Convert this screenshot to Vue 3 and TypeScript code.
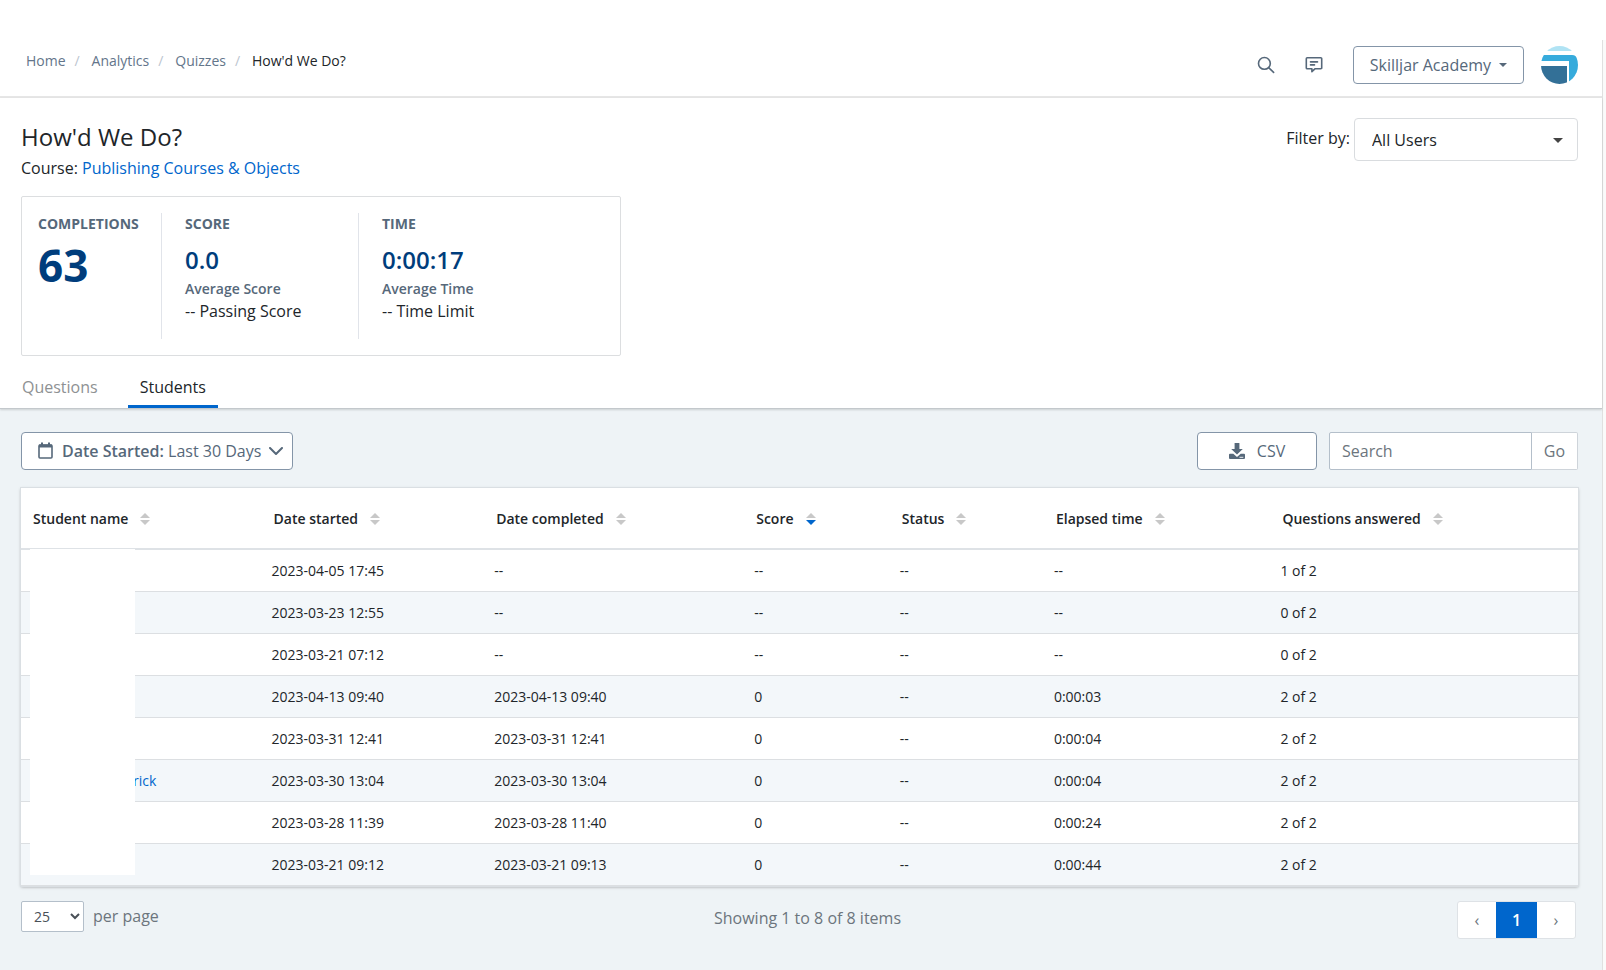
<script setup lang="ts">
import { ref } from 'vue'

interface Column {
  key: string
  label: string
  width: string
  sorted?: boolean
}

interface Attempt {
  name: string
  started: string
  completed: string
  score: string
  status: string
  elapsed: string
  answered: string
}

const crumbs: string[] = ['Home', 'Analytics', 'Quizzes']

const columns: Column[] = [
  { key: 'name', label: 'Student name', width: '15.45%' },
  { key: 'started', label: 'Date started', width: '14.3%' },
  { key: 'completed', label: 'Date completed', width: '16.7%' },
  { key: 'score', label: 'Score', width: '9.35%', sorted: true },
  { key: 'status', label: 'Status', width: '9.9%' },
  { key: 'elapsed', label: 'Elapsed time', width: '14.55%' },
  { key: 'answered', label: 'Questions answered', width: 'auto' },
]

const attempt = (
  started: string,
  completed: string,
  score: string,
  elapsed: string,
  answered: string,
  name = '',
): Attempt => ({ name, started, completed, score, status: '--', elapsed, answered })

const attempts: Attempt[] = [
  attempt('2023-04-05 17:45', '--', '--', '--', '1 of 2'),
  attempt('2023-03-23 12:55', '--', '--', '--', '0 of 2'),
  attempt('2023-03-21 07:12', '--', '--', '--', '0 of 2'),
  attempt('2023-04-13 09:40', '2023-04-13 09:40', '0', '0:00:03', '2 of 2'),
  attempt('2023-03-31 12:41', '2023-03-31 12:41', '0', '0:00:04', '2 of 2'),
  attempt('2023-03-30 13:04', '2023-03-30 13:04', '0', '0:00:04', '2 of 2', 'rick'),
  attempt('2023-03-28 11:39', '2023-03-28 11:40', '0', '0:00:24', '2 of 2'),
  attempt('2023-03-21 09:12', '2023-03-21 09:13', '0', '0:00:44', '2 of 2'),
]

const userFilter = ref('All Users')
const search = ref('')
const pageSize = ref('25')
</script>

<template>
  <div class="page">
    <div class="shell">
      <header class="topbar">
        <nav class="crumbs" aria-label="Breadcrumb">
          <template v-for="crumb in crumbs" :key="crumb">
            <a href="#">{{ crumb }}</a>
            <span class="slash">/</span>
          </template>
          <span class="current">How'd We Do?</span>
        </nav>
        <div class="account">
          <button class="icon-button" type="button" aria-label="Search">
            <svg width="18" height="18" viewBox="0 0 18 18" fill="none" stroke="#56687a" stroke-width="1.6">
              <circle cx="7.4" cy="7.4" r="5.9" />
              <path d="M11.7 11.7 16.6 16.4" stroke-linecap="round" />
            </svg>
          </button>
          <button class="icon-button" type="button" aria-label="Messages">
            <svg width="18" height="18" viewBox="0 0 18 18" fill="none" stroke="#56687a" stroke-width="1.6">
              <path d="M2.2 1.8h13.6a.9.9 0 0 1 .9.9v9.2a.9.9 0 0 1-.9.9H9.9L6.9 15.7V12.8H2.2a.9.9 0 0 1-.9-.9V2.7a.9.9 0 0 1 .9-.9Z" stroke-linejoin="round" />
              <path d="M5.500 5.900h7M5.500 8.900h4" stroke-linecap="round" />
            </svg>
          </button>
          <button class="outline academy" type="button">
            Skilljar Academy
            <svg width="8" height="4" viewBox="0 0 8 4"><path d="M0 0h8L4 4Z" fill="#56687a" /></svg>
          </button>
          <svg class="avatar" width="37" height="38" viewBox="0 0 37 38" role="img" aria-label="Account">
            <clipPath id="avatar-clip"><ellipse cx="18.5" cy="19" rx="18.5" ry="19" /></clipPath>
            <g clip-path="url(#avatar-clip)">
              <rect width="37" height="38" fill="#fff" />
              <rect width="37" height="5" fill="#b0e3f4" />
              <path d="M0 9H31Q35 9 37 13V38H28V15H0Z" fill="#36abdc" />
              <path d="M0 20H26V38H0Z" fill="#337097" />
            </g>
          </svg>
        </div>
      </header>

      <section class="summary">
        <div class="heading">
          <div>
            <h1>How'd We Do?</h1>
            <p class="course">Course: <a href="#">Publishing Courses &amp; Objects</a></p>
          </div>
          <div class="filter">
            <label for="user-filter">Filter by:</label>
            <div class="select-wrap">
              <select id="user-filter" v-model="userFilter">
                <option>All Users</option>
              </select>
              <svg class="caret" width="10" height="5" viewBox="0 0 10 5"><path d="M0 0h10L5 5Z" fill="#444" /></svg>
            </div>
          </div>
        </div>

        <div class="stats">
          <div class="stat">
            <h2>COMPLETIONS</h2>
            <p class="total">63</p>
          </div>
          <div class="stat score">
            <h2>SCORE</h2>
            <p class="value">0.0</p>
            <p class="caption">Average Score</p>
            <p>-- Passing Score</p>
          </div>
          <div class="stat">
            <h2>TIME</h2>
            <p class="value">0:00:17</p>
            <p class="caption">Average Time</p>
            <p>-- Time Limit</p>
          </div>
        </div>

        <nav class="tabs">
          <a href="#">Questions</a>
          <a href="#" class="active" aria-current="page">Students</a>
        </nav>
      </section>

      <main class="content">
        <div class="toolbar">
          <button class="outline date" type="button">
            <svg width="16" height="18" viewBox="0 0 16 18" fill="none" stroke="#56687a">
              <rect x="1" y="3" width="13" height="13" rx="1" stroke-width="1.6" />
              <path d="M1 4h13" stroke-width="3" />
              <path d="M4 .5v3M11 .5v3" stroke-width="2" />
            </svg>
            <span><b>Date Started:</b> Last 30 Days</span>
            <svg width="14" height="9" viewBox="0 0 14 9" fill="none" stroke="#56687a" stroke-width="2"><path d="M1 1l6 6 6-6" stroke-linecap="round" stroke-linejoin="round" /></svg>
          </button>
          <div class="tools">
            <button class="outline csv" type="button">
              <svg width="16" height="17" viewBox="0 0 16 17" fill="#56687a">
                <path d="M5.6 0h4.8v6h3.4L8 11.6 2.2 6h3.4Z" />
                <path d="M1 10.800h3.300L8 14l3.700-3.200H15a1 1 0 0 1 1 1V15a1 1 0 0 1-1 1H1a1 1 0 0 1-1-1v-3.200a1 1 0 0 1 1-1Z" />
                <path d="M10.500 14.300h3.800" stroke="#fff" stroke-width=".9" />
              </svg>
              CSV
            </button>
            <form class="search" @submit.prevent>
              <input v-model="search" type="text" placeholder="Search" aria-label="Search students" />
              <button type="submit">Go</button>
            </form>
          </div>
        </div>

        <div class="card">
          <table>
            <colgroup>
              <col v-for="column in columns" :key="column.key" :style="{ width: column.width }" />
            </colgroup>
            <thead>
              <tr>
                <th v-for="column in columns" :key="column.key" scope="col">
                  <span class="th">
                    {{ column.label }}
                    <svg width="10" height="12" viewBox="0 0 10 12">
                      <path d="M5 0l5 5H0Z" fill="#c8c8c8" />
                      <path d="M0 7h10L5 12Z" :fill="column.sorted ? '#0066cc' : '#c8c8c8'" />
                    </svg>
                  </span>
                </th>
              </tr>
            </thead>
            <tbody>
              <tr v-for="row in attempts" :key="row.started">
                <td><a v-if="row.name" class="student" href="#">{{ row.name }}</a></td>
                <td>{{ row.started }}</td>
                <td>{{ row.completed }}</td>
                <td>{{ row.score }}</td>
                <td>{{ row.status }}</td>
                <td>{{ row.elapsed }}</td>
                <td>{{ row.answered }}</td>
              </tr>
            </tbody>
          </table>
          <div class="redaction"></div>
        </div>

        <footer class="footer">
          <div class="page-size">
            <select id="page-size" v-model="pageSize">
              <option>25</option>
              <option>50</option>
            </select>
            <label for="page-size">per page</label>
          </div>
          <p class="showing">Showing 1 to 8 of 8 items</p>
          <nav class="pager" aria-label="Pages">
            <button type="button" aria-label="Previous page">‹</button>
            <button type="button" class="active">1</button>
            <button type="button" aria-label="Next page">›</button>
          </nav>
        </footer>
      </main>
    </div>
  </div>
</template>

<style>
body {
  margin: 0;
  background: #fff;
}
</style>

<style scoped>
.page {
  box-sizing: border-box;
  display: flex;
  min-height: 100vh;
  padding: 40px 3px 0 0;
  background: linear-gradient(#fff 40px, #fafafa 40px);
  color: #212529;
  font: 16px/24px 'Open Sans', 'Noto Sans', sans-serif;
}

.page * {
  box-sizing: border-box;
}

.shell {
  flex: 1;
  display: flex;
  flex-direction: column;
  border-right: 1px solid #e0e0e0;
  background: #fff;
}

a {
  color: #0066cc;
  text-decoration: none;
}

p,
h1,
h2 {
  margin: 0;
}

button,
input,
select {
  font: inherit;
  color: #56687a;
}

.topbar {
  display: flex;
  justify-content: space-between;
  height: 58px;
  padding: 6px 24px 0 26px;
  border-bottom: 2px solid #e6e6e6;
}

.crumbs {
  display: flex;
  padding-top: 3px;
  font-size: 14px;
}

.crumbs a {
  color: #63758a;
}

.slash {
  width: 26px;
  padding-left: 9px;
  color: #bcc5cf;
}

.account {
  display: flex;
  align-items: flex-start;
}

.icon-button {
  display: flex;
  width: 18px;
  height: 38px;
  margin-right: 30px;
  padding: 0;
  align-items: center;
  border: 0;
  background: none;
}

.outline {
  display: flex;
  height: 38px;
  align-items: center;
  border: 1px solid #8495a8;
  border-radius: 4px;
  background: #fff;
}

.academy {
  gap: 8px;
  margin-right: 17px;
  padding: 0 16px;
}

.summary {
  position: relative;
  padding: 20px 24px 0 21px;
  border-bottom: 1px solid #c3c8cc;
  box-shadow: 0 1px 2px rgba(0, 0, 0, 0.15);
}

.heading {
  display: flex;
  justify-content: space-between;
  height: 78px;
}

h1 {
  padding-top: 4px;
  font-size: 24px;
  font-weight: 400;
  line-height: 30px;
}

.course {
  padding-top: 4px;
}

.filter {
  display: flex;
  gap: 4px;
  align-items: flex-start;
}

.filter label {
  padding-top: 8px;
}

.select-wrap {
  position: relative;
}

.select-wrap select {
  width: 224px;
  height: 43px;
  padding: 0 17px;
  appearance: none;
  border: 1px solid #d9dcdf;
  border-radius: 4px;
  background: #fff;
  color: #212529;
}

.caret {
  position: absolute;
  top: 20px;
  right: 15px;
  pointer-events: none;
}

.stats {
  display: flex;
  max-width: 600px;
  height: 160px;
  padding: 16px;
  border: 1px solid #dcdee0;
  border-radius: 2px;
}

.stat {
  padding-left: 23px;
}

.stat + .stat {
  border-left: 1px solid #e1e4ea;
}

.stat:first-child {
  width: 123px;
  padding-left: 0;
}

.stat.score {
  width: 197px;
}

h2 {
  color: #56687a;
  font-size: 14px;
  font-weight: 700;
  line-height: 22px;
}

.total {
  color: #003d7c;
  font-size: 44px;
  font-weight: 700;
  line-height: 60px;
}

.value {
  padding-top: 7px;
  color: #003d7c;
  font-size: 24px;
  font-weight: 600;
  line-height: 36px;
}

.caption {
  padding-top: 1px;
  color: #56687a;
  font-size: 14px;
  font-weight: 600;
  line-height: 20px;
}

.tabs {
  display: flex;
  gap: 18px;
  padding-top: 13px;
}

.tabs a {
  height: 39px;
  padding: 6px 12px 0;
  border-bottom: 3px solid transparent;
  color: #8e9193;
}

.tabs a:first-child {
  padding-left: 1px;
}

.tabs .active {
  border-bottom-color: #0066cc;
  color: #212529;
}

.content {
  flex: 1;
  padding: 23px 24px 24px 21px;
  background: #eef3f6;
}

.toolbar,
.tools,
.search {
  display: flex;
}

.toolbar {
  justify-content: space-between;
}

.tools {
  gap: 12px;
}

.date {
  gap: 8px;
  padding: 0 9px 0 16px;
}

b {
  font-weight: 600;
}

.csv {
  width: 120px;
  gap: 12px;
  justify-content: center;
}

.search input {
  width: 203px;
  height: 38px;
  padding: 0 12px;
  border: 1px solid #b4bfca;
  border-radius: 2px 0 0 2px;
  background: #fff;
}

.search input::placeholder {
  color: #6c757d;
  opacity: 1;
}

.search button {
  width: 46px;
  padding: 0;
  border: 1px solid #ced4da;
  border-left: 0;
  border-radius: 0 2px 2px 0;
  background: #fff;
  color: #6c757d;
}

.card {
  position: relative;
  margin-top: 18px;
  background: #fff;
  box-shadow: 0 0 0 1px #dadfe3, 0 1px 3px rgba(0, 0, 0, 0.35);
}

table {
  width: 100%;
  table-layout: fixed;
  border-collapse: separate;
  border-spacing: 0;
  font-size: 14px;
}

th {
  height: 62px;
  padding: 2px 12px 0;
  border-bottom: 2px solid #dee2e6;
  font-weight: 600;
  text-align: left;
}

.th {
  display: flex;
  gap: 12px;
  align-items: center;
}

td {
  height: 42px;
  padding: 0 10px;
  border-bottom: 1px solid #dcdfe2;
}

tbody tr:nth-child(even) {
  background: #f3f7fa;
}

.student {
  margin-left: 102px;
}

.redaction {
  position: absolute;
  top: 61px;
  bottom: 11px;
  left: 9px;
  width: 105px;
  background: #fff;
}

.footer {
  display: grid;
  grid-template-columns: 1fr auto 1fr;
  padding: 15px 2px 0 0;
}

.page-size {
  display: flex;
  gap: 9px;
  align-items: flex-start;
  color: #6c757d;
}

.page-size label {
  padding-top: 3px;
}

.page-size select {
  width: 63px;
  height: 31px;
  padding: 0 0 0 8px;
  border: 1px solid #b4bfca;
  border-radius: 2px;
  background: #fff;
  color: #495057;
  font-size: 14px;
}

.showing {
  padding: 5px 0 0 18px;
  color: #6c757d;
}

.pager {
  display: flex;
  justify-self: end;
  height: 38px;
  border: 1px solid #dee2e6;
  border-radius: 3px;
  background: #fff;
}

.pager button {
  width: 38px;
  padding: 0;
  border: 0;
  background: none;
  color: #6c757d;
}

.pager .active {
  width: 41px;
  background: #0066cc;
  color: #fff;
  font-weight: 600;
}
</style>
